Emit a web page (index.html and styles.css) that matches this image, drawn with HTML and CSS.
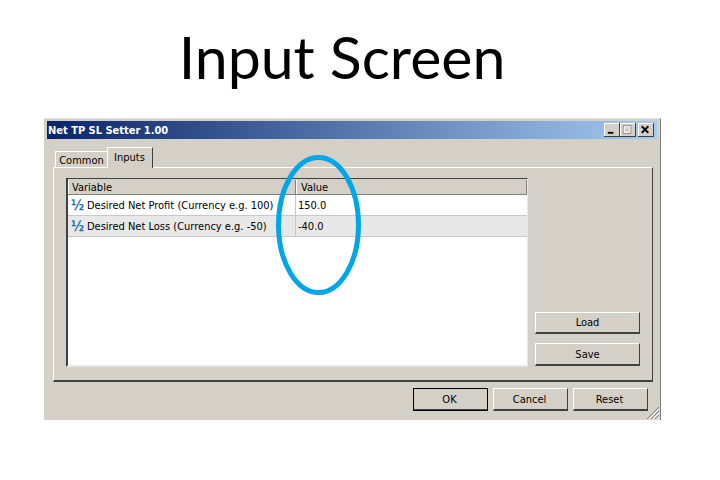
FILE: index.html
```html
<!DOCTYPE html>
<html lang="en">
<head>
    <meta charset="UTF-8">
    <title>Input Screen</title>
    <link rel="stylesheet" href="styles.css">
</head>
<body>
    <h1 class="slide-title">Input Screen</h1>

    <div class="window">
        <div class="titlebar">
            <span class="titlebar-text">Net TP SL Setter 1.00</span>
            <div class="win-controls">
                <div class="win-btn">
                    <svg width="16" height="14" viewBox="0 0 16 14"><rect x="4" y="9" width="6" height="2" fill="#000"/></svg>
                </div>
                <div class="win-btn">
                    <svg width="16" height="14" viewBox="0 0 16 14"><rect x="3.5" y="2.5" width="8" height="8" fill="none" stroke="#808080"/><rect x="4.5" y="3.5" width="6" height="6" fill="none" stroke="#fff"/></svg>
                </div>
                <div class="win-btn win-btn-close">
                    <svg width="16" height="14" viewBox="0 0 16 14"><path d="M4 3 L11 10 M11 3 L4 10" stroke="#000" stroke-width="2" fill="none"/></svg>
                </div>
            </div>
        </div>

        <div class="tabs">
            <div class="tab">Common</div>
            <div class="tab tab-active">Inputs</div>
        </div>

        <div class="tab-panel">
            <div class="grid">
                <div class="grid-head">
                    <div class="head-cell">Variable</div>
                    <div class="head-cell">Value</div>
                </div>
                <div class="grid-row">
                    <div class="cell cell-name"><span class="half">½</span>Desired Net Profit (Currency e.g. 100)</div>
                    <div class="cell cell-value">150.0</div>
                </div>
                <div class="grid-row grid-row-alt">
                    <div class="cell cell-name"><span class="half">½</span>Desired Net Loss (Currency e.g. -50)</div>
                    <div class="cell cell-value">-40.0</div>
                </div>
            </div>
            <div class="side-buttons">
                <div class="btn btn-side btn-load">Load</div>
                <div class="btn btn-side">Save</div>
            </div>
        </div>

        <div class="footer">
            <div class="btn btn-foot btn-default">OK</div>
            <div class="btn btn-foot">Cancel</div>
            <div class="btn btn-foot">Reset</div>
        </div>

        <svg class="grip" width="14" height="14" viewBox="0 0 14 14">
            <path d="M13 1 L1 13 M13 5 L5 13 M13 9 L9 13" stroke="#808080" stroke-width="1" fill="none"/>
            <path d="M13 3 L3 13 M13 7 L7 13 M13 11 L11 13" stroke="#fff" stroke-width="1" fill="none"/>
        </svg>

        <svg class="circle" width="89" height="144" viewBox="0 0 89 144">
            <ellipse cx="44.5" cy="72" rx="40" ry="67.5" fill="none" stroke="#00a6e8" stroke-width="5"/>
        </svg>
    </div>
</body>
</html>
```

FILE: styles.css
```css
:root {
    --face: #d4d0c8;
    --shadow: #808080;
    --dark: #404040;
}

body {
    margin: 0;
    background: #fff;
    font-family: "DejaVu Sans", sans-serif;
    font-stretch: condensed;
    font-size: 11px;
    color: #000;
    overflow: hidden;
}

.slide-title {
    margin: 0;
    height: 118px;
    box-sizing: border-box;
    padding: 17px 36px 0 0;
    text-align: center;
    font-family: Lato, sans-serif;
    font-stretch: normal;
    font-weight: 400;
    font-size: 59px;
    line-height: 80px;
}

.window {
    position: relative;
    box-sizing: border-box;
    width: 618px;
    height: 302px;
    margin-left: 43px;
    padding: 2px 3px 0 3px;
    background: var(--face);
    border-top: 1px solid #e4e2dc;
    border-left: 1px solid #fff;
    border-right: 1px solid var(--shadow);
}

.titlebar {
    display: flex;
    align-items: center;
    justify-content: space-between;
    height: 18px;
    padding: 0 3px 0 1px;
    background: linear-gradient(to right, #0a246a, #a6caf0);
}

.titlebar-text {
    color: #fff;
    font-weight: bold;
    font-size: 11px;
}

.win-controls {
    display: flex;
}

.win-btn {
    display: flex;
    width: 16px;
    height: 14px;
    background: var(--face);
    border-right: 1px solid var(--dark);
    border-bottom: 1px solid var(--dark);
    box-shadow: inset 1px 1px 0 #fff;
    box-sizing: border-box;
}

.win-btn-close {
    margin-left: 2px;
}

.tabs {
    display: flex;
    align-items: flex-end;
    height: 20px;
    margin: 8px 0 0 8px;
}

.tab {
    display: flex;
    align-items: center;
    justify-content: center;
    box-sizing: border-box;
    width: 52px;
    height: 16px;
    padding-top: 1px;
    border-top: 1px solid #fff;
    border-left: 1px solid #fff;
}

.tab-active {
    position: relative;
    z-index: 1;
    width: 46px;
    height: 21px;
    margin-bottom: -1px;
    padding: 0 1px 2px 0;
    background: var(--face);
    border-right: 1px solid var(--dark);
}

.tab-panel {
    display: flex;
    gap: 7px;
    box-sizing: border-box;
    width: 600px;
    height: 215px;
    margin-left: 6px;
    padding: 10px 0 14px 12px;
    border-top: 1px solid #fff;
    border-left: 1px solid #fff;
    border-right: 1px solid var(--dark);
    border-bottom: 2px solid var(--dark);
}

.grid {
    box-sizing: border-box;
    width: 462px;
    height: 189px;
    background: #fff;
    border-top: 1px solid var(--dark);
    border-left: 2px solid var(--dark);
    border-right: 1px solid #e8e8e8;
    border-bottom: 2px solid #e8e8e8;
}

.grid-head {
    display: grid;
    grid-template-columns: 228px 1fr;
    box-sizing: border-box;
    height: 16px;
    padding-top: 1px;
    background: var(--face);
    border-bottom: 1px solid var(--shadow);
}

.head-cell {
    display: flex;
    align-items: center;
    padding-left: 4px;
    border-right: 1px solid var(--shadow);
    box-shadow: inset 1px 0 0 #fff;
}

.head-cell:last-child {
    padding-left: 5px;
}

.grid-row {
    display: grid;
    grid-template-columns: 228px 1fr;
    height: 21px;
    border-bottom: 1px solid #c8c8c8;
    box-sizing: border-box;
}

.grid-row-alt {
    background: #e8e8e8;
}

.cell {
    display: flex;
    align-items: center;
}

.cell-name {
    padding-left: 3px;
    border-right: 1px solid #c8c8c8;
}

.cell-value {
    padding-left: 2px;
}

.half {
    width: 16px;
    color: #1f6bb0;
    font-size: 14px;
    font-weight: bold;
    line-height: 1;
}

.side-buttons {
    display: flex;
    flex-direction: column;
    justify-content: flex-end;
    gap: 9px;
    height: 188px;
}

.btn {
    display: flex;
    align-items: center;
    justify-content: center;
    box-sizing: border-box;
    background: var(--face);
    border-top: 1px solid #fff;
    border-left: 1px solid #fff;
    border-right: 1px solid var(--dark);
    border-bottom: 2px solid var(--dark);
}

.btn-side {
    width: 105px;
    height: 23px;
}

.btn-load {
    height: 22px;
}

.footer {
    display: flex;
    justify-content: flex-end;
    gap: 5px;
    margin: 6px 9px 0 0;
}

.btn-foot {
    width: 75px;
    height: 23px;
    padding-right: 2px;
}

.btn-default {
    outline: 1px solid #000;
    outline-offset: -1px;
}

.grip {
    position: absolute;
    right: 0;
    bottom: 0;
}

.circle {
    position: absolute;
    left: 229.5px;
    top: 34px;
}
```
